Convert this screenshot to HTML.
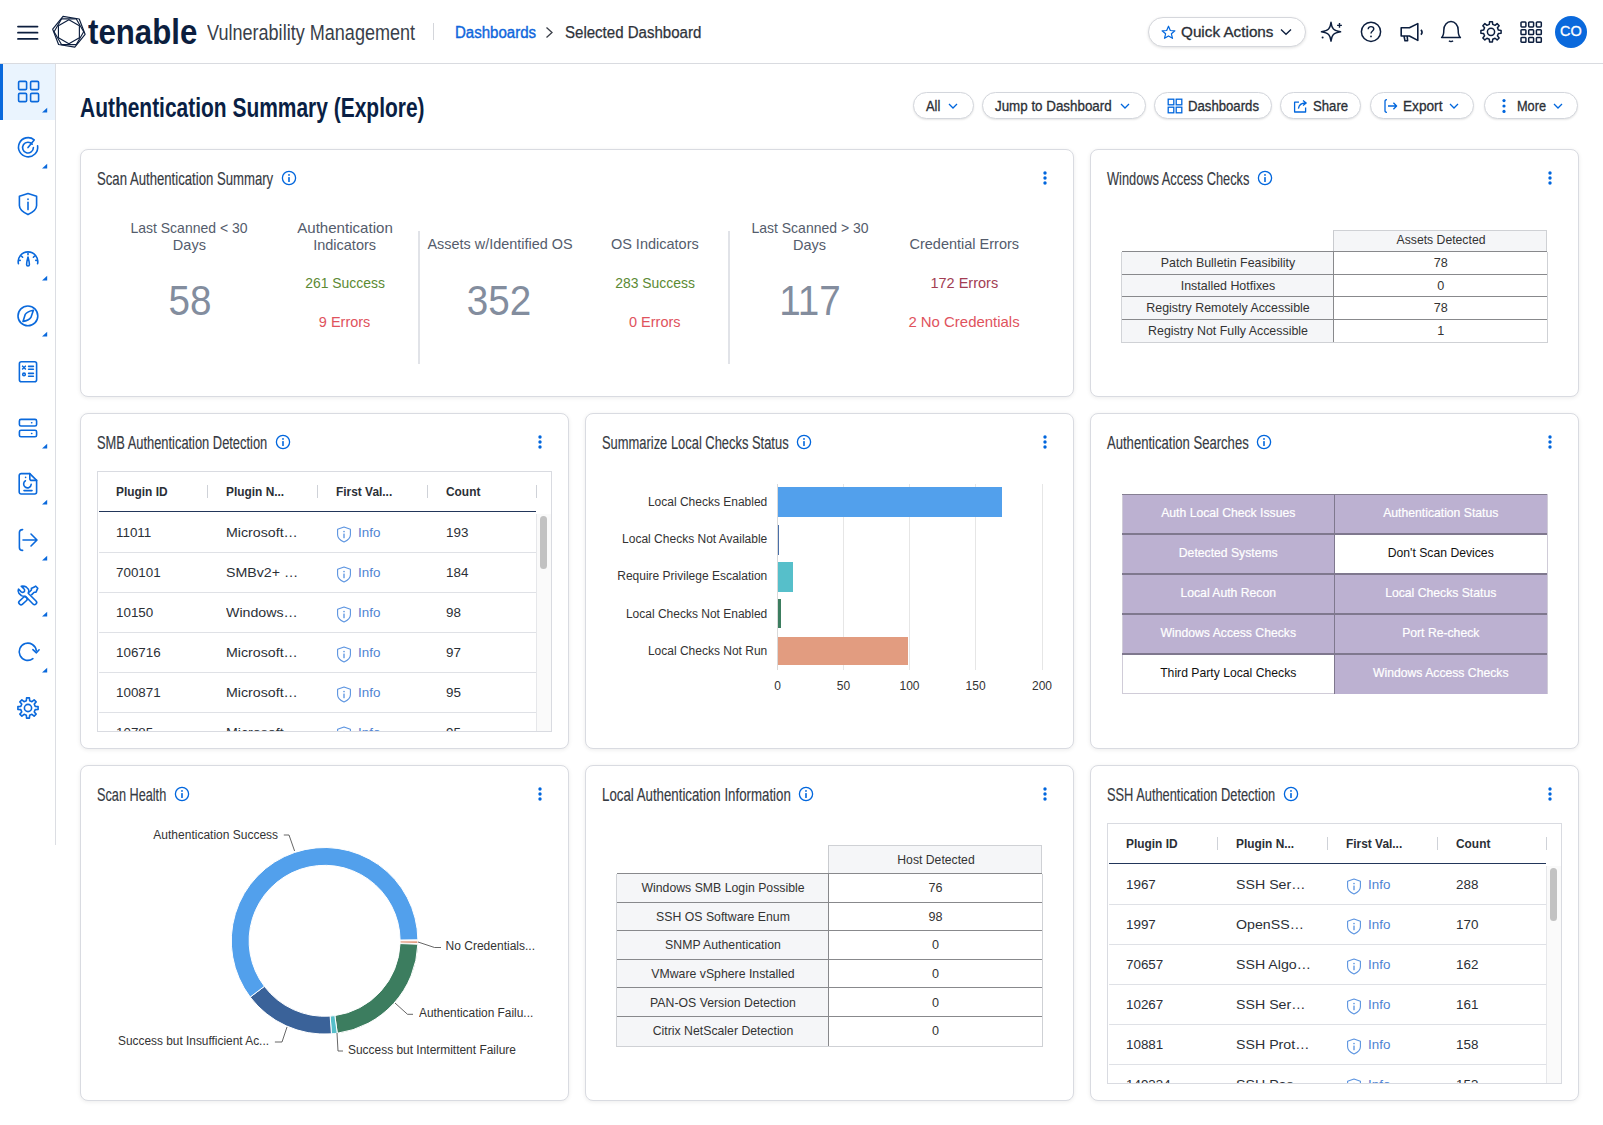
<!DOCTYPE html>
<html><head><meta charset="utf-8"><title>Authentication Summary</title>
<style>
html,body{margin:0;padding:0;background:#fff;}
body{width:1603px;height:1125px;position:relative;overflow:hidden;font-family:"Liberation Sans", sans-serif;}
.a{position:absolute;box-sizing:border-box;}
.t{position:absolute;white-space:nowrap;}
svg.a{overflow:visible;}
</style></head><body>
<div class="a" style="left:0px;top:63px;width:1603px;height:1px;background:#d9dbe0"></div>
<svg class="a" style="left:17px;top:25px;" width="22" height="16" viewBox="0 0 22 16"><g stroke="#0c1e3e" stroke-width="1.8" stroke-linecap="round"><line x1="1" y1="1.6" x2="20.5" y2="1.6"/><line x1="1" y1="7.7" x2="20.5" y2="7.7"/><line x1="1" y1="13.9" x2="20.5" y2="13.9"/></g></svg>
<svg class="a" style="left:51px;top:15px;" width="34" height="34" viewBox="0 0 34 34"><polygon points="28.38,22.80 17.90,28.85 7.42,22.80 7.42,10.70 17.90,4.65 28.38,10.70" fill="none" stroke="#0c1e3e" stroke-width="1.15" stroke-linejoin="round"/><polygon points="34.10,19.32 23.78,32.06 7.58,29.50 1.70,14.18 12.02,1.44 28.22,4.00" fill="none" stroke="#0c1e3e" stroke-width="1.15" stroke-linejoin="round"/><polygon points="32.70,16.75 25.30,29.57 10.50,29.57 3.10,16.75 10.50,3.93 25.30,3.93" fill="none" stroke="#0c1e3e" stroke-width="1.15" stroke-linejoin="round"/></svg>
<div class="t" style="top:14.37px;font-size:35px;line-height:35px;color:#0c1e3e;font-weight:bold;left:87.50px;transform:scaleX(0.892);transform-origin:0 50%;">tenable</div>
<div class="t" style="top:22.50px;font-size:21.5px;line-height:21.5px;color:#3a3f4a;font-weight:normal;left:207.00px;transform:scaleX(0.84);transform-origin:0 50%;">Vulnerability Management</div>
<div class="a" style="left:433px;top:23px;width:1px;height:17px;background:#d4d6db"></div>
<div class="t" style="top:24.76px;font-size:16px;line-height:16px;color:#0f66dc;font-weight:normal;left:454.80px;transform:scaleX(0.94);transform-origin:0 50%;-webkit-text-stroke:0.4px #0f66dc;">Dashboards</div>
<svg class="a" style="left:544px;top:26px;" width="10" height="13" viewBox="0 0 10 13"><path d="M2.5 1.5 L8 6.5 L2.5 11.5" fill="none" stroke="#3b3f48" stroke-width="1.3"/></svg>
<div class="t" style="top:24.76px;font-size:16px;line-height:16px;color:#2f333b;font-weight:normal;left:564.60px;transform:scaleX(0.94);transform-origin:0 50%;-webkit-text-stroke:0.25px #2f333b;">Selected Dashboard</div>
<div class="a" style="left:1148px;top:17px;width:158px;height:30px;border:1px solid #d5d7dc;border-radius:16px;background:#fff;box-shadow:0 1px 3px rgba(0,0,0,0.12)"></div>
<svg class="a" style="left:1161px;top:25px;" width="15" height="15" viewBox="0 0 15 15"><path d="M7.5 1.2 L9.3 5.5 L13.9 5.8 L10.4 8.8 L11.5 13.3 L7.5 10.9 L3.5 13.3 L4.6 8.8 L1.1 5.8 L5.7 5.5 Z" fill="none" stroke="#0066dd" stroke-width="1.2" stroke-linejoin="round"/></svg>
<div class="t" style="top:24.38px;font-size:15.5px;line-height:15.5px;color:#2b2f36;font-weight:normal;left:1181.00px;transform:scaleX(0.985);transform-origin:0 50%;-webkit-text-stroke:0.3px #2b2f36;">Quick Actions</div>
<svg class="a" style="left:1280px;top:28px;" width="12" height="8" viewBox="0 0 12 8"><path d="M1 1.5 L6 6.3 L11 1.5" fill="none" stroke="#0c1e3e" stroke-width="1.3"/></svg>
<svg class="a" style="left:1318px;top:20px;" width="26" height="24" viewBox="0 0 26 24"><g fill="none" stroke="#0c1e3e" stroke-width="1.4" stroke-linejoin="round"><path d="M13 2.2 C13.8 9 15.5 10.6 22.6 11.8 C15.5 13 13.8 14.6 13 21.2 C12.2 14.6 10.5 13 3.4 11.8 C10.5 10.6 12.2 9 13 2.2 Z"/><path d="M21.5 3 V7.8 M19.1 5.4 H23.9"/></g><circle cx="4.6" cy="17.6" r="1" fill="#0c1e3e"/></svg>
<svg class="a" style="left:1360px;top:21px;" width="22" height="22" viewBox="0 0 22 22"><circle cx="11" cy="10.8" r="9.6" fill="none" stroke="#0c1e3e" stroke-width="1.5"/><path d="M8.2 8.3 C8.2 6.6 9.5 5.6 11 5.6 C12.6 5.6 13.8 6.6 13.8 8.1 C13.8 10 11 10.1 11 12.4" fill="none" stroke="#0c1e3e" stroke-width="1.4"/><circle cx="11" cy="15.4" r="0.9" fill="#0c1e3e"/></svg>
<svg class="a" style="left:1399px;top:21px;" width="26" height="23" viewBox="0 0 26 23"><g fill="none" stroke="#0c1e3e" stroke-width="1.6" stroke-linejoin="round"><path d="M2.2 6.8 H10.4 L18.8 2.6 V19.4 L10.4 15 H2.2 Z"/><path d="M5 15 L6 19.8 H8.6 L8.2 15"/><path d="M22 8.8 C23.2 10.2 23.2 12.4 22 13.8"/></g></svg>
<svg class="a" style="left:1439px;top:20px;" width="24" height="24" viewBox="0 0 24 24"><g fill="none" stroke="#0c1e3e" stroke-width="1.5" stroke-linejoin="round"><path d="M2.6 17.6 C4.4 15.8 4.8 14.2 4.8 10.2 C4.8 5.2 8 1.6 12 1.6 C16 1.6 19.2 5.2 19.2 10.2 C19.2 14.2 19.6 15.8 21.4 17.6 Z"/><path d="M10 20.8 C11 21.8 13 21.8 14 20.8"/></g></svg>
<svg class="a" style="left:1479px;top:20px;" width="24" height="24" viewBox="0 0 24 24"><polygon points="19.41,10.09 22.10,10.38 22.10,13.22 19.41,13.51 18.45,15.83 20.15,17.94 18.14,19.95 16.03,18.25 13.71,19.21 13.42,21.90 10.58,21.90 10.29,19.21 7.97,18.25 5.86,19.95 3.85,17.94 5.55,15.83 4.59,13.51 1.90,13.22 1.90,10.38 4.59,10.09 5.55,7.77 3.85,5.66 5.86,3.65 7.97,5.35 10.29,4.39 10.58,1.70 13.42,1.70 13.71,4.39 16.03,5.35 18.14,3.65 20.15,5.66 18.45,7.77" fill="none" stroke="#0c1e3e" stroke-width="1.5" stroke-linejoin="round"/><circle cx="12" cy="11.8" r="3.6" fill="none" stroke="#0c1e3e" stroke-width="1.5"/></svg>
<svg class="a" style="left:1520.2px;top:20.8px;" width="24" height="24" viewBox="0 0 24 24"><rect x="1.0" y="1.0" width="4.9" height="4.9" rx="0.8" fill="none" stroke="#0c1e3e" stroke-width="1.5"/><rect x="1.0" y="8.7" width="4.9" height="4.9" rx="0.8" fill="none" stroke="#0c1e3e" stroke-width="1.5"/><rect x="1.0" y="16.4" width="4.9" height="4.9" rx="0.8" fill="none" stroke="#0c1e3e" stroke-width="1.5"/><rect x="8.7" y="1.0" width="4.9" height="4.9" rx="0.8" fill="none" stroke="#0c1e3e" stroke-width="1.5"/><rect x="8.7" y="8.7" width="4.9" height="4.9" rx="0.8" fill="none" stroke="#0c1e3e" stroke-width="1.5"/><rect x="8.7" y="16.4" width="4.9" height="4.9" rx="0.8" fill="none" stroke="#0c1e3e" stroke-width="1.5"/><rect x="16.4" y="1.0" width="4.9" height="4.9" rx="0.8" fill="none" stroke="#0c1e3e" stroke-width="1.5"/><rect x="16.4" y="8.7" width="4.9" height="4.9" rx="0.8" fill="none" stroke="#0c1e3e" stroke-width="1.5"/><rect x="16.4" y="16.4" width="4.9" height="4.9" rx="0.8" fill="none" stroke="#0c1e3e" stroke-width="1.5"/></svg>
<div class="a" style="left:1555px;top:16px;width:32px;height:32px;border-radius:50%;background:#0a69dc"></div>
<div class="t" style="top:24.33px;font-size:14.5px;line-height:14.5px;color:#fff;font-weight:normal;left:1551.00px;width:40px;text-align:center;-webkit-text-stroke:0.3px #fff;letter-spacing:0.2px;">CO</div>
<div class="a" style="left:55px;top:64px;width:1px;height:781px;background:#dcdee3"></div>
<div class="a" style="left:0px;top:64px;width:55px;height:56px;background:#eaf4fe"></div>
<div class="a" style="left:0px;top:64px;width:3px;height:56px;background:#0a69dc"></div>
<svg class="a" style="left:16px;top:80px;" width="24" height="24" viewBox="0 0 24 24"><g fill="none" stroke="#0a69dc" stroke-width="1.6" stroke-linecap="round" stroke-linejoin="round"><rect x="2.6" y="1.4" width="8" height="8.2" rx="1.2"/><rect x="14.6" y="1.4" width="8" height="8.2" rx="1.2"/><rect x="2.6" y="13.4" width="8" height="8.2" rx="1.2"/><rect x="14.6" y="13.4" width="8" height="8.2" rx="1.2"/></g></svg>
<svg class="a" style="left:41px;top:107px;" width="7" height="6" viewBox="0 0 7 6"><path d="M6.2 0.8 V5.6 H1 Z" fill="#0a69dc"/></svg>
<svg class="a" style="left:16px;top:136px;" width="24" height="24" viewBox="0 0 24 24"><g fill="none" stroke="#0a69dc" stroke-width="1.6" stroke-linecap="round" stroke-linejoin="round"><path d="M18.2 3.8 A9.6 9.6 0 1 0 21.6 9.8"/><path d="M16.2 8.2 A5.4 5.4 0 1 0 17.4 11.6"/><path d="M12 11.6 L17.8 4.6"/></g></svg>
<svg class="a" style="left:41px;top:163px;" width="7" height="6" viewBox="0 0 7 6"><path d="M6.2 0.8 V5.6 H1 Z" fill="#0a69dc"/></svg>
<svg class="a" style="left:16px;top:192px;" width="24" height="24" viewBox="0 0 24 24"><g fill="none" stroke="#0a69dc" stroke-width="1.6" stroke-linecap="round" stroke-linejoin="round"><path d="M12 1.6 L20.6 4.2 V13.6 C20.6 17.6 16.8 20.4 12 22.6 C7.2 20.4 3.4 17.6 3.4 13.6 V4.2 Z"/><path d="M12 10.4 V17.6"/><path d="M12 7 V7.4"/></g></svg>
<svg class="a" style="left:16px;top:248px;" width="24" height="24" viewBox="0 0 24 24"><g fill="none" stroke="#0a69dc" stroke-width="1.6" stroke-linecap="round" stroke-linejoin="round"><path d="M2.4 15.6 A9.8 9.8 0 1 1 21.6 15.6"/><path d="M12 5.2 V6.8 M5.4 8 L6.6 9.2 M18.6 8 L17.4 9.2 M2.6 12.4 H4.2 M21.4 12.4 H19.8"/><path d="M12 9 C13 12.6 13.4 14.8 13.4 16.6 A1.4 1.4 0 0 1 10.6 16.6 C10.6 14.8 11 12.6 12 9 Z"/></g></svg>
<svg class="a" style="left:41px;top:275px;" width="7" height="6" viewBox="0 0 7 6"><path d="M6.2 0.8 V5.6 H1 Z" fill="#0a69dc"/></svg>
<svg class="a" style="left:16px;top:304px;" width="24" height="24" viewBox="0 0 24 24"><g fill="none" stroke="#0a69dc" stroke-width="1.6" stroke-linecap="round" stroke-linejoin="round"><circle cx="11.9" cy="11.9" r="9.9"/><path d="M17.4 6.2 C13.6 6.8 10.6 8.4 9.2 10.4 L7 17.4 C10.8 16.8 13.6 15.2 15 13.2 Z"/></g></svg>
<svg class="a" style="left:41px;top:331px;" width="7" height="6" viewBox="0 0 7 6"><path d="M6.2 0.8 V5.6 H1 Z" fill="#0a69dc"/></svg>
<svg class="a" style="left:16px;top:360px;" width="24" height="24" viewBox="0 0 24 24"><g fill="none" stroke="#0a69dc" stroke-width="1.6" stroke-linecap="round" stroke-linejoin="round"><rect x="3.4" y="1.8" width="17.2" height="20" rx="2"/><path d="M6.6 6.2 L9.4 9 M9.4 6.2 L6.6 9"/><circle cx="8" cy="14.4" r="1.3"/><path d="M12.6 6.4 H17.4 M12.6 9.2 H17.4 M12.6 13.4 H17.4 M12.6 16.2 H17.4"/></g></svg>
<svg class="a" style="left:16px;top:416px;" width="24" height="24" viewBox="0 0 24 24"><g fill="none" stroke="#0a69dc" stroke-width="1.6" stroke-linecap="round" stroke-linejoin="round"><rect x="3.4" y="3.4" width="17.2" height="6.6" rx="1.6"/><rect x="3.4" y="14.2" width="17.2" height="6.6" rx="1.6"/><path d="M15.6 6.7 H15.8 M15.6 17.5 H15.8"/></g></svg>
<svg class="a" style="left:41px;top:443px;" width="7" height="6" viewBox="0 0 7 6"><path d="M6.2 0.8 V5.6 H1 Z" fill="#0a69dc"/></svg>
<svg class="a" style="left:16px;top:472px;" width="24" height="24" viewBox="0 0 24 24"><g fill="none" stroke="#0a69dc" stroke-width="1.6" stroke-linecap="round" stroke-linejoin="round"><path d="M5.2 1.6 H13.8 L20.6 8.4 V20 A2 2 0 0 1 18.6 22 H5.2 A2 2 0 0 1 3.2 20 V3.6 A2 2 0 0 1 5.2 1.6 Z"/><path d="M13.8 1.6 V6.4 A2 2 0 0 0 15.8 8.4 H20.6"/><path d="M9.4 8.8 A3.8 3.8 0 1 0 15.2 12.4"/><path d="M9.6 5.2 V5.4"/><path d="M8 18.6 H16"/></g></svg>
<svg class="a" style="left:41px;top:499px;" width="7" height="6" viewBox="0 0 7 6"><path d="M6.2 0.8 V5.6 H1 Z" fill="#0a69dc"/></svg>
<svg class="a" style="left:16px;top:528px;" width="24" height="24" viewBox="0 0 24 24"><g fill="none" stroke="#0a69dc" stroke-width="1.6" stroke-linecap="round" stroke-linejoin="round"><path d="M6.6 1.6 C4.4 1.6 3.4 2.6 3.4 4.6 V19.4 C3.4 21.4 4.4 22.4 6.6 22.4"/><path d="M7 12 H20.8 M15 6 L21 12 L15 18"/></g></svg>
<svg class="a" style="left:41px;top:555px;" width="7" height="6" viewBox="0 0 7 6"><path d="M6.2 0.8 V5.6 H1 Z" fill="#0a69dc"/></svg>
<svg class="a" style="left:16px;top:584px;" width="24" height="24" viewBox="0 0 24 24"><g fill="none" stroke="#0a69dc" stroke-width="1.6" stroke-linecap="round" stroke-linejoin="round"><path d="M5.2 2.2 C7 2 9 2.2 10.2 3 L12.4 5.2 C13 6.2 12.8 8 12.2 9.2 L20 17 C20.8 17.8 20.8 19.2 20 20 C19.2 20.8 17.8 20.8 17 20 L9.4 12.2 C8 12.4 6.4 12.2 5.4 11.6 L3 9.4 C2 8.2 1.8 6.6 2.5 5.2 L5.2 7.8 C6.2 8.6 7.6 8.6 8.4 7.6 C8.8 6.6 8.6 5.2 7.8 4.6 Z"/><path d="M13.4 8 L15.4 6 V4.2 C17 3.6 18.4 3.2 19.8 2.2 L21.8 4.2 C21 5.4 20.6 7 20 8.2 H18.2 L15.8 10.6"/><rect x="2.3" y="14.6" width="9.3" height="4.4" rx="1.8" transform="rotate(-42 6.95 16.8)"/></g></svg>
<svg class="a" style="left:41px;top:611px;" width="7" height="6" viewBox="0 0 7 6"><path d="M6.2 0.8 V5.6 H1 Z" fill="#0a69dc"/></svg>
<svg class="a" style="left:16px;top:640px;" width="24" height="24" viewBox="0 0 24 24"><g fill="none" stroke="#0a69dc" stroke-width="1.6" stroke-linecap="round" stroke-linejoin="round"><path d="M16.9 18.7 A8.6 8.6 0 1 1 20.3 10.6"/><path d="M16.9 9.6 L20.4 12.8 L23.1 9.8"/></g></svg>
<svg class="a" style="left:41px;top:667px;" width="7" height="6" viewBox="0 0 7 6"><path d="M6.2 0.8 V5.6 H1 Z" fill="#0a69dc"/></svg>
<svg class="a" style="left:16px;top:696px;" width="24" height="24" viewBox="0 0 24 24"><polygon points="19.21,10.34 22.10,10.58 22.10,13.42 19.21,13.66 18.28,15.92 20.15,18.14 18.14,20.15 15.92,18.28 13.66,19.21 13.42,22.10 10.58,22.10 10.34,19.21 8.08,18.28 5.86,20.15 3.85,18.14 5.72,15.92 4.79,13.66 1.90,13.42 1.90,10.58 4.79,10.34 5.72,8.08 3.85,5.86 5.86,3.85 8.08,5.72 10.34,4.79 10.58,1.90 13.42,1.90 13.66,4.79 15.92,5.72 18.14,3.85 20.15,5.86 18.28,8.08" fill="none" stroke="#0a69dc" stroke-width="1.6" stroke-linejoin="round"/><circle cx="12" cy="12" r="3.6" fill="none" stroke="#0a69dc" stroke-width="1.6"/></svg>
<div class="t" style="top:93.27px;font-size:28.5px;line-height:28.5px;color:#0a1f44;font-weight:bold;left:80.00px;transform:scaleX(0.735);transform-origin:0 50%;">Authentication Summary (Explore)</div>
<div class="a" style="left:913px;top:92px;width:61px;height:27px;border:1px solid #d3d6dc;border-radius:14px;background:#fff;box-shadow:0 1px 2px rgba(0,0,0,0.10)"></div>
<div class="t" style="top:98.95px;font-size:14px;line-height:14px;color:#2b2f36;font-weight:normal;left:926.00px;transform:scaleX(0.92);transform-origin:0 50%;-webkit-text-stroke:0.3px #2b2f36;">All</div>
<svg class="a" style="left:948px;top:103px;" width="10" height="6" viewBox="0 0 10 6"><path d="M1 1 L5 5 L9 1" fill="none" stroke="#0066dd" stroke-width="1.3"/></svg>
<div class="a" style="left:982px;top:92px;width:164px;height:27px;border:1px solid #d3d6dc;border-radius:14px;background:#fff;box-shadow:0 1px 2px rgba(0,0,0,0.10)"></div>
<div class="t" style="top:98.95px;font-size:14px;line-height:14px;color:#2b2f36;font-weight:normal;left:995.00px;transform:scaleX(0.955);transform-origin:0 50%;-webkit-text-stroke:0.3px #2b2f36;">Jump to Dashboard</div>
<svg class="a" style="left:1120px;top:103px;" width="10" height="6" viewBox="0 0 10 6"><path d="M1 1 L5 5 L9 1" fill="none" stroke="#0066dd" stroke-width="1.3"/></svg>
<div class="a" style="left:1154px;top:92px;width:118px;height:27px;border:1px solid #d3d6dc;border-radius:14px;background:#fff;box-shadow:0 1px 2px rgba(0,0,0,0.10)"></div>
<svg class="a" style="left:1167px;top:98px;" width="16" height="16" viewBox="0 0 16 16"><g fill="none" stroke="#0066dd" stroke-width="1.3"><rect x="1.2" y="1.2" width="5.6" height="5.6"/><rect x="9.2" y="1.2" width="5.6" height="5.6"/><rect x="1.2" y="9.2" width="5.6" height="5.6"/><rect x="9.2" y="9.2" width="5.6" height="5.6"/></g></svg>
<div class="t" style="top:98.95px;font-size:14px;line-height:14px;color:#2b2f36;font-weight:normal;left:1187.50px;transform:scaleX(0.94);transform-origin:0 50%;-webkit-text-stroke:0.3px #2b2f36;">Dashboards</div>
<div class="a" style="left:1280px;top:92px;width:81px;height:27px;border:1px solid #d3d6dc;border-radius:14px;background:#fff;box-shadow:0 1px 2px rgba(0,0,0,0.10)"></div>
<svg class="a" style="left:1293px;top:98px;" width="16" height="16" viewBox="0 0 16 16"><g fill="none" stroke="#0066dd" stroke-width="1.3" stroke-linejoin="round"><path d="M6 4.2 H1.6 V14 H12.6 V9.6"/><path d="M5.4 10.6 C6 7 8.6 5 12.4 5 M10 2.4 L13.2 5 L10 7.6"/></g></svg>
<div class="t" style="top:98.95px;font-size:14px;line-height:14px;color:#2b2f36;font-weight:normal;left:1312.50px;transform:scaleX(0.94);transform-origin:0 50%;-webkit-text-stroke:0.3px #2b2f36;">Share</div>
<div class="a" style="left:1370px;top:92px;width:104px;height:27px;border:1px solid #d3d6dc;border-radius:14px;background:#fff;box-shadow:0 1px 2px rgba(0,0,0,0.10)"></div>
<svg class="a" style="left:1383px;top:98px;" width="16" height="16" viewBox="0 0 16 16"><g fill="none" stroke="#0066dd" stroke-width="1.3" stroke-linejoin="round"><path d="M4 1.6 C2.6 1.6 2 2.2 2 3.2 V12.8 C2 13.8 2.6 14.4 4 14.4"/><path d="M5 8 H13.6 M10.4 4.8 L13.6 8 L10.4 11.2"/></g></svg>
<div class="t" style="top:98.95px;font-size:14px;line-height:14px;color:#2b2f36;font-weight:normal;left:1402.50px;transform:scaleX(0.975);transform-origin:0 50%;-webkit-text-stroke:0.3px #2b2f36;">Export</div>
<svg class="a" style="left:1449px;top:103px;" width="10" height="6" viewBox="0 0 10 6"><path d="M1 1 L5 5 L9 1" fill="none" stroke="#0066dd" stroke-width="1.3"/></svg>
<div class="a" style="left:1484px;top:92px;width:94px;height:27px;border:1px solid #d3d6dc;border-radius:14px;background:#fff;box-shadow:0 1px 2px rgba(0,0,0,0.10)"></div>
<svg class="a" style="left:1500px;top:98px;" width="8" height="16" viewBox="0 0 8 16"><g fill="#0066dd"><circle cx="4" cy="2.6" r="1.6"/><circle cx="4" cy="8" r="1.6"/><circle cx="4" cy="13.4" r="1.6"/></g></svg>
<div class="t" style="top:98.95px;font-size:14px;line-height:14px;color:#2b2f36;font-weight:normal;left:1516.50px;transform:scaleX(0.91);transform-origin:0 50%;-webkit-text-stroke:0.3px #2b2f36;">More</div>
<svg class="a" style="left:1553px;top:103px;" width="10" height="6" viewBox="0 0 10 6"><path d="M1 1 L5 5 L9 1" fill="none" stroke="#0066dd" stroke-width="1.3"/></svg>
<div class="a" style="left:80px;top:149px;width:994px;height:248px;border:1px solid #d9dbe1;border-radius:8px;background:#fff;box-shadow:0 1px 4px rgba(0,0,0,0.08)"></div>
<div class="t" style="top:170.99px;font-size:17.5px;line-height:17.5px;color:#363a42;font-weight:normal;left:97.00px;transform:scaleX(0.7515782289711653);transform-origin:0 50%;-webkit-text-stroke:0.15px #363a42;">Scan Authentication Summary</div>
<svg class="a" style="left:280.5px;top:170px;" width="16" height="16" viewBox="0 0 16 16"><circle cx="8" cy="8" r="6.6" fill="none" stroke="#0066dd" stroke-width="1.3"/><rect x="7.2" y="7" width="1.6" height="5" rx="0.6" fill="#0066dd"/><circle cx="8" cy="4.9" r="0.95" fill="#0066dd"/></svg>
<svg class="a" style="left:1041px;top:170px;" width="8" height="16" viewBox="0 0 8 16"><g fill="#0066dd"><circle cx="4" cy="3" r="1.7"/><circle cx="4" cy="8" r="1.7"/><circle cx="4" cy="13" r="1.7"/></g></svg>
<div class="a" style="left:1090px;top:149px;width:489px;height:248px;border:1px solid #d9dbe1;border-radius:8px;background:#fff;box-shadow:0 1px 4px rgba(0,0,0,0.08)"></div>
<div class="t" style="top:170.99px;font-size:17.5px;line-height:17.5px;color:#363a42;font-weight:normal;left:1107.00px;transform:scaleX(0.7320584001645074);transform-origin:0 50%;-webkit-text-stroke:0.15px #363a42;">Windows Access Checks</div>
<svg class="a" style="left:1256.7px;top:170px;" width="16" height="16" viewBox="0 0 16 16"><circle cx="8" cy="8" r="6.6" fill="none" stroke="#0066dd" stroke-width="1.3"/><rect x="7.2" y="7" width="1.6" height="5" rx="0.6" fill="#0066dd"/><circle cx="8" cy="4.9" r="0.95" fill="#0066dd"/></svg>
<svg class="a" style="left:1546px;top:170px;" width="8" height="16" viewBox="0 0 8 16"><g fill="#0066dd"><circle cx="4" cy="3" r="1.7"/><circle cx="4" cy="8" r="1.7"/><circle cx="4" cy="13" r="1.7"/></g></svg>
<div class="a" style="left:80px;top:413px;width:489px;height:336px;border:1px solid #d9dbe1;border-radius:8px;background:#fff;box-shadow:0 1px 4px rgba(0,0,0,0.08)"></div>
<div class="t" style="top:434.99px;font-size:17.5px;line-height:17.5px;color:#363a42;font-weight:normal;left:97.00px;transform:scaleX(0.7351099209605666);transform-origin:0 50%;-webkit-text-stroke:0.15px #363a42;">SMB Authentication Detection</div>
<svg class="a" style="left:274.5px;top:434px;" width="16" height="16" viewBox="0 0 16 16"><circle cx="8" cy="8" r="6.6" fill="none" stroke="#0066dd" stroke-width="1.3"/><rect x="7.2" y="7" width="1.6" height="5" rx="0.6" fill="#0066dd"/><circle cx="8" cy="4.9" r="0.95" fill="#0066dd"/></svg>
<svg class="a" style="left:536px;top:434px;" width="8" height="16" viewBox="0 0 8 16"><g fill="#0066dd"><circle cx="4" cy="3" r="1.7"/><circle cx="4" cy="8" r="1.7"/><circle cx="4" cy="13" r="1.7"/></g></svg>
<div class="a" style="left:585px;top:413px;width:489px;height:336px;border:1px solid #d9dbe1;border-radius:8px;background:#fff;box-shadow:0 1px 4px rgba(0,0,0,0.08)"></div>
<div class="t" style="top:434.99px;font-size:17.5px;line-height:17.5px;color:#363a42;font-weight:normal;left:602.00px;transform:scaleX(0.7378702202538653);transform-origin:0 50%;-webkit-text-stroke:0.15px #363a42;">Summarize Local Checks Status</div>
<svg class="a" style="left:795.9px;top:434px;" width="16" height="16" viewBox="0 0 16 16"><circle cx="8" cy="8" r="6.6" fill="none" stroke="#0066dd" stroke-width="1.3"/><rect x="7.2" y="7" width="1.6" height="5" rx="0.6" fill="#0066dd"/><circle cx="8" cy="4.9" r="0.95" fill="#0066dd"/></svg>
<svg class="a" style="left:1041px;top:434px;" width="8" height="16" viewBox="0 0 8 16"><g fill="#0066dd"><circle cx="4" cy="3" r="1.7"/><circle cx="4" cy="8" r="1.7"/><circle cx="4" cy="13" r="1.7"/></g></svg>
<div class="a" style="left:1090px;top:413px;width:489px;height:336px;border:1px solid #d9dbe1;border-radius:8px;background:#fff;box-shadow:0 1px 4px rgba(0,0,0,0.08)"></div>
<div class="t" style="top:434.99px;font-size:17.5px;line-height:17.5px;color:#363a42;font-weight:normal;left:1107.00px;transform:scaleX(0.7468901539110268);transform-origin:0 50%;-webkit-text-stroke:0.15px #363a42;">Authentication Searches</div>
<svg class="a" style="left:1256.0px;top:434px;" width="16" height="16" viewBox="0 0 16 16"><circle cx="8" cy="8" r="6.6" fill="none" stroke="#0066dd" stroke-width="1.3"/><rect x="7.2" y="7" width="1.6" height="5" rx="0.6" fill="#0066dd"/><circle cx="8" cy="4.9" r="0.95" fill="#0066dd"/></svg>
<svg class="a" style="left:1546px;top:434px;" width="8" height="16" viewBox="0 0 8 16"><g fill="#0066dd"><circle cx="4" cy="3" r="1.7"/><circle cx="4" cy="8" r="1.7"/><circle cx="4" cy="13" r="1.7"/></g></svg>
<div class="a" style="left:80px;top:765px;width:489px;height:336px;border:1px solid #d9dbe1;border-radius:8px;background:#fff;box-shadow:0 1px 4px rgba(0,0,0,0.08)"></div>
<div class="t" style="top:786.99px;font-size:17.5px;line-height:17.5px;color:#363a42;font-weight:normal;left:97.00px;transform:scaleX(0.7258233689951752);transform-origin:0 50%;-webkit-text-stroke:0.15px #363a42;">Scan Health</div>
<svg class="a" style="left:173.5px;top:786px;" width="16" height="16" viewBox="0 0 16 16"><circle cx="8" cy="8" r="6.6" fill="none" stroke="#0066dd" stroke-width="1.3"/><rect x="7.2" y="7" width="1.6" height="5" rx="0.6" fill="#0066dd"/><circle cx="8" cy="4.9" r="0.95" fill="#0066dd"/></svg>
<svg class="a" style="left:536px;top:786px;" width="8" height="16" viewBox="0 0 8 16"><g fill="#0066dd"><circle cx="4" cy="3" r="1.7"/><circle cx="4" cy="8" r="1.7"/><circle cx="4" cy="13" r="1.7"/></g></svg>
<div class="a" style="left:585px;top:765px;width:489px;height:336px;border:1px solid #d9dbe1;border-radius:8px;background:#fff;box-shadow:0 1px 4px rgba(0,0,0,0.08)"></div>
<div class="t" style="top:786.99px;font-size:17.5px;line-height:17.5px;color:#363a42;font-weight:normal;left:602.00px;transform:scaleX(0.7580502690114831);transform-origin:0 50%;-webkit-text-stroke:0.15px #363a42;">Local Authentication Information</div>
<svg class="a" style="left:798.1px;top:786px;" width="16" height="16" viewBox="0 0 16 16"><circle cx="8" cy="8" r="6.6" fill="none" stroke="#0066dd" stroke-width="1.3"/><rect x="7.2" y="7" width="1.6" height="5" rx="0.6" fill="#0066dd"/><circle cx="8" cy="4.9" r="0.95" fill="#0066dd"/></svg>
<svg class="a" style="left:1041px;top:786px;" width="8" height="16" viewBox="0 0 8 16"><g fill="#0066dd"><circle cx="4" cy="3" r="1.7"/><circle cx="4" cy="8" r="1.7"/><circle cx="4" cy="13" r="1.7"/></g></svg>
<div class="a" style="left:1090px;top:765px;width:489px;height:336px;border:1px solid #d9dbe1;border-radius:8px;background:#fff;box-shadow:0 1px 4px rgba(0,0,0,0.08)"></div>
<div class="t" style="top:786.99px;font-size:17.5px;line-height:17.5px;color:#363a42;font-weight:normal;left:1107.00px;transform:scaleX(0.732610305326887);transform-origin:0 50%;-webkit-text-stroke:0.15px #363a42;">SSH Authentication Detection</div>
<svg class="a" style="left:1282.5px;top:786px;" width="16" height="16" viewBox="0 0 16 16"><circle cx="8" cy="8" r="6.6" fill="none" stroke="#0066dd" stroke-width="1.3"/><rect x="7.2" y="7" width="1.6" height="5" rx="0.6" fill="#0066dd"/><circle cx="8" cy="4.9" r="0.95" fill="#0066dd"/></svg>
<svg class="a" style="left:1546px;top:786px;" width="8" height="16" viewBox="0 0 8 16"><g fill="#0066dd"><circle cx="4" cy="3" r="1.7"/><circle cx="4" cy="8" r="1.7"/><circle cx="4" cy="13" r="1.7"/></g></svg>
<div class="t" style="top:221.13px;font-size:14.5px;line-height:14.5px;color:#545c6c;font-weight:normal;left:89.40px;width:200px;text-align:center;transform:scaleX(0.965);transform-origin:50% 50%;">Last Scanned &lt; 30</div>
<div class="t" style="top:237.73px;font-size:14.5px;line-height:14.5px;color:#545c6c;font-weight:normal;left:89.40px;width:200px;text-align:center;">Days</div>
<div class="t" style="top:221.13px;font-size:14.5px;line-height:14.5px;color:#545c6c;font-weight:normal;left:244.60px;width:200px;text-align:center;transform:scaleX(1.04);transform-origin:50% 50%;">Authentication</div>
<div class="t" style="top:237.73px;font-size:14.5px;line-height:14.5px;color:#545c6c;font-weight:normal;left:244.60px;width:200px;text-align:center;">Indicators</div>
<div class="t" style="top:221.13px;font-size:14.5px;line-height:14.5px;color:#545c6c;font-weight:normal;left:709.50px;width:200px;text-align:center;transform:scaleX(0.965);transform-origin:50% 50%;">Last Scanned &gt; 30</div>
<div class="t" style="top:237.73px;font-size:14.5px;line-height:14.5px;color:#545c6c;font-weight:normal;left:709.50px;width:200px;text-align:center;">Days</div>
<div class="t" style="top:236.73px;font-size:14.5px;line-height:14.5px;color:#545c6c;font-weight:normal;left:389.70px;width:220px;text-align:center;transform:scaleX(0.995);transform-origin:50% 50%;">Assets w/Identified OS</div>
<div class="t" style="top:236.73px;font-size:14.5px;line-height:14.5px;color:#545c6c;font-weight:normal;left:544.80px;width:220px;text-align:center;">OS Indicators</div>
<div class="t" style="top:236.73px;font-size:14.5px;line-height:14.5px;color:#545c6c;font-weight:normal;left:854.30px;width:220px;text-align:center;">Credential Errors</div>
<div class="t" style="top:279.95px;font-size:42px;line-height:42px;color:#838d9e;font-weight:normal;left:129.60px;width:120px;text-align:center;transform:scaleX(0.92);transform-origin:50% 50%;">58</div>
<div class="t" style="top:279.95px;font-size:42px;line-height:42px;color:#838d9e;font-weight:normal;left:439.20px;width:120px;text-align:center;transform:scaleX(0.92);transform-origin:50% 50%;">352</div>
<div class="t" style="top:279.95px;font-size:42px;line-height:42px;color:#838d9e;font-weight:normal;left:749.50px;width:120px;text-align:center;transform:scaleX(0.92);transform-origin:50% 50%;">117</div>
<div class="t" style="top:275.73px;font-size:14.5px;line-height:14.5px;color:#5b8a34;font-weight:normal;left:244.60px;width:200px;text-align:center;transform:scaleX(0.96);transform-origin:50% 50%;">261 Success</div>
<div class="t" style="top:314.73px;font-size:14.5px;line-height:14.5px;color:#e0535d;font-weight:normal;left:244.60px;width:200px;text-align:center;">9 Errors</div>
<div class="t" style="top:275.73px;font-size:14.5px;line-height:14.5px;color:#5b8a34;font-weight:normal;left:554.80px;width:200px;text-align:center;transform:scaleX(0.96);transform-origin:50% 50%;">283 Success</div>
<div class="t" style="top:314.73px;font-size:14.5px;line-height:14.5px;color:#e0535d;font-weight:normal;left:554.80px;width:200px;text-align:center;">0 Errors</div>
<div class="t" style="top:275.73px;font-size:14.5px;line-height:14.5px;color:#a23d53;font-weight:normal;left:864.30px;width:200px;text-align:center;">172 Errors</div>
<div class="t" style="top:314.73px;font-size:14.5px;line-height:14.5px;color:#e0535d;font-weight:normal;left:864.30px;width:200px;text-align:center;transform:scaleX(1.03);transform-origin:50% 50%;">2 No Credentials</div>
<div class="a" style="left:418px;top:231px;width:1.5px;height:133px;background:#e1e3e8"></div>
<div class="a" style="left:728px;top:231px;width:1.5px;height:133px;background:#e1e3e8"></div>
<div class="a" style="left:1333px;top:230px;width:214px;height:22px;background:#f5f6f8;border:1px solid #cfd1d5;border-left:1.5px solid #c9cbcf;border-bottom:none"></div>
<div class="a" style="left:1122px;top:252px;width:212px;height:90px;background:#f5f6f8"></div>
<div class="a" style="left:1121px;top:252px;width:427px;height:91px;border:1px solid #cfd1d5;border-top:none;border-left:1.5px solid #d2d4d8"></div>
<div class="a" style="left:1122px;top:251px;width:425px;height:1px;background:#88898c"></div>
<div class="a" style="left:1122px;top:274px;width:425px;height:1px;background:#88898c"></div>
<div class="a" style="left:1122px;top:296px;width:425px;height:1px;background:#88898c"></div>
<div class="a" style="left:1122px;top:319px;width:425px;height:1px;background:#88898c"></div>
<div class="a" style="left:1333px;top:252px;width:1px;height:90px;background:#88898c"></div>
<div class="t" style="top:234.07px;font-size:12.6px;line-height:12.6px;color:#333333;font-weight:normal;left:1290.75px;width:300px;text-align:center;transform:scaleX(0.97);transform-origin:50% 50%;">Assets Detected</div>
<div class="t" style="top:257.33px;font-size:12.6px;line-height:12.6px;color:#333333;font-weight:normal;left:1078.25px;width:300px;text-align:center;transform:scaleX(0.985);transform-origin:50% 50%;">Patch Bulletin Feasibility</div>
<div class="t" style="top:257.33px;font-size:12.6px;line-height:12.6px;color:#333333;font-weight:normal;left:1340.75px;width:200px;text-align:center;">78</div>
<div class="t" style="top:279.83px;font-size:12.6px;line-height:12.6px;color:#333333;font-weight:normal;left:1078.25px;width:300px;text-align:center;transform:scaleX(0.985);transform-origin:50% 50%;">Installed Hotfixes</div>
<div class="t" style="top:279.83px;font-size:12.6px;line-height:12.6px;color:#333333;font-weight:normal;left:1340.75px;width:200px;text-align:center;">0</div>
<div class="t" style="top:302.33px;font-size:12.6px;line-height:12.6px;color:#333333;font-weight:normal;left:1078.25px;width:300px;text-align:center;transform:scaleX(0.985);transform-origin:50% 50%;">Registry Remotely Accessible</div>
<div class="t" style="top:302.33px;font-size:12.6px;line-height:12.6px;color:#333333;font-weight:normal;left:1340.75px;width:200px;text-align:center;">78</div>
<div class="t" style="top:324.73px;font-size:12.6px;line-height:12.6px;color:#333333;font-weight:normal;left:1078.25px;width:300px;text-align:center;transform:scaleX(0.985);transform-origin:50% 50%;">Registry Not Fully Accessible</div>
<div class="t" style="top:324.73px;font-size:12.6px;line-height:12.6px;color:#333333;font-weight:normal;left:1340.75px;width:200px;text-align:center;">1</div>
<div class="a" style="left:97px;top:471px;width:455px;height:261px;border:1.5px solid #d9dbe1;background:#fff"></div>
<div class="a" style="left:98.5px;top:472.5px;width:452px;height:258px;overflow:hidden;">
<div class="t" style="top:13.36px;font-size:12.8px;line-height:12.8px;color:#2b2f36;font-weight:bold;left:17.50px;transform:scaleX(0.93);transform-origin:0 50%;">Plugin ID</div>
<div class="t" style="top:13.36px;font-size:12.8px;line-height:12.8px;color:#2b2f36;font-weight:bold;left:127.50px;transform:scaleX(0.93);transform-origin:0 50%;">Plugin N...</div>
<div class="t" style="top:13.36px;font-size:12.8px;line-height:12.8px;color:#2b2f36;font-weight:bold;left:237.50px;transform:scaleX(0.93);transform-origin:0 50%;">First Val...</div>
<div class="t" style="top:13.36px;font-size:12.8px;line-height:12.8px;color:#2b2f36;font-weight:bold;left:347.50px;transform:scaleX(0.93);transform-origin:0 50%;">Count</div>
<div class="a" style="left:108.5px;top:12.5px;width:1px;height:13px;background:#cfd2d8"></div>
<div class="a" style="left:218.5px;top:12.5px;width:1px;height:13px;background:#cfd2d8"></div>
<div class="a" style="left:328.5px;top:12.5px;width:1px;height:13px;background:#cfd2d8"></div>
<div class="a" style="left:437.0px;top:12.5px;width:1px;height:13px;background:#cfd2d8"></div>
<div class="a" style="left:-1.5px;top:38.39999999999998px;width:438.5px;height:1.6px;background:#22365a"></div>
<div class="a" style="left:437.0px;top:41.0px;width:15px;height:217px;background:#fafafa;border-left:1px solid #e6e7ea"></div>
<div class="a" style="left:441.5px;top:43.5px;width:7.4px;height:52.5px;background:#c2c2c2;border-radius:4px"></div>
<div class="a" style="left:-1.5px;top:79.5px;width:438.5px;height:1.2px;background:#dfe1e6"></div>
<div class="t" style="top:53.86px;font-size:13.4px;line-height:13.4px;color:#2b2f36;font-weight:normal;left:17.50px;">11011</div>
<div class="t" style="top:53.86px;font-size:13.4px;line-height:13.4px;color:#2b2f36;font-weight:normal;left:127.50px;transform:scaleX(1.06);transform-origin:0 50%;">Microsoft…</div>
<svg class="a" style="left:237.0px;top:53.5px;" width="16" height="17" viewBox="0 0 16 17"><path d="M8 1 L14.4 3.2 V8.8 C14.4 12 11.8 14.4 8 16 C4.2 14.4 1.6 12 1.6 8.8 V3.2 Z" fill="none" stroke="#5a93e0" stroke-width="1.1" stroke-linejoin="round"/><rect x="7.35" y="7.6" width="1.3" height="4.6" fill="#5a93e0"/><circle cx="8" cy="5.6" r="0.8" fill="#5a93e0"/></svg>
<div class="t" style="top:53.86px;font-size:13.4px;line-height:13.4px;color:#4f84d3;font-weight:normal;left:259.50px;">Info</div>
<div class="t" style="top:53.86px;font-size:13.4px;line-height:13.4px;color:#2b2f36;font-weight:normal;left:347.50px;">193</div>
<div class="a" style="left:-1.5px;top:119.5px;width:438.5px;height:1.2px;background:#dfe1e6"></div>
<div class="t" style="top:93.86px;font-size:13.4px;line-height:13.4px;color:#2b2f36;font-weight:normal;left:17.50px;">700101</div>
<div class="t" style="top:93.86px;font-size:13.4px;line-height:13.4px;color:#2b2f36;font-weight:normal;left:127.50px;transform:scaleX(1.06);transform-origin:0 50%;">SMBv2+ …</div>
<svg class="a" style="left:237.0px;top:93.5px;" width="16" height="17" viewBox="0 0 16 17"><path d="M8 1 L14.4 3.2 V8.8 C14.4 12 11.8 14.4 8 16 C4.2 14.4 1.6 12 1.6 8.8 V3.2 Z" fill="none" stroke="#5a93e0" stroke-width="1.1" stroke-linejoin="round"/><rect x="7.35" y="7.6" width="1.3" height="4.6" fill="#5a93e0"/><circle cx="8" cy="5.6" r="0.8" fill="#5a93e0"/></svg>
<div class="t" style="top:93.86px;font-size:13.4px;line-height:13.4px;color:#4f84d3;font-weight:normal;left:259.50px;">Info</div>
<div class="t" style="top:93.86px;font-size:13.4px;line-height:13.4px;color:#2b2f36;font-weight:normal;left:347.50px;">184</div>
<div class="a" style="left:-1.5px;top:159.5px;width:438.5px;height:1.2px;background:#dfe1e6"></div>
<div class="t" style="top:133.86px;font-size:13.4px;line-height:13.4px;color:#2b2f36;font-weight:normal;left:17.50px;">10150</div>
<div class="t" style="top:133.86px;font-size:13.4px;line-height:13.4px;color:#2b2f36;font-weight:normal;left:127.50px;transform:scaleX(1.06);transform-origin:0 50%;">Windows…</div>
<svg class="a" style="left:237.0px;top:133.5px;" width="16" height="17" viewBox="0 0 16 17"><path d="M8 1 L14.4 3.2 V8.8 C14.4 12 11.8 14.4 8 16 C4.2 14.4 1.6 12 1.6 8.8 V3.2 Z" fill="none" stroke="#5a93e0" stroke-width="1.1" stroke-linejoin="round"/><rect x="7.35" y="7.6" width="1.3" height="4.6" fill="#5a93e0"/><circle cx="8" cy="5.6" r="0.8" fill="#5a93e0"/></svg>
<div class="t" style="top:133.86px;font-size:13.4px;line-height:13.4px;color:#4f84d3;font-weight:normal;left:259.50px;">Info</div>
<div class="t" style="top:133.86px;font-size:13.4px;line-height:13.4px;color:#2b2f36;font-weight:normal;left:347.50px;">98</div>
<div class="a" style="left:-1.5px;top:199.5px;width:438.5px;height:1.2px;background:#dfe1e6"></div>
<div class="t" style="top:173.86px;font-size:13.4px;line-height:13.4px;color:#2b2f36;font-weight:normal;left:17.50px;">106716</div>
<div class="t" style="top:173.86px;font-size:13.4px;line-height:13.4px;color:#2b2f36;font-weight:normal;left:127.50px;transform:scaleX(1.06);transform-origin:0 50%;">Microsoft…</div>
<svg class="a" style="left:237.0px;top:173.5px;" width="16" height="17" viewBox="0 0 16 17"><path d="M8 1 L14.4 3.2 V8.8 C14.4 12 11.8 14.4 8 16 C4.2 14.4 1.6 12 1.6 8.8 V3.2 Z" fill="none" stroke="#5a93e0" stroke-width="1.1" stroke-linejoin="round"/><rect x="7.35" y="7.6" width="1.3" height="4.6" fill="#5a93e0"/><circle cx="8" cy="5.6" r="0.8" fill="#5a93e0"/></svg>
<div class="t" style="top:173.86px;font-size:13.4px;line-height:13.4px;color:#4f84d3;font-weight:normal;left:259.50px;">Info</div>
<div class="t" style="top:173.86px;font-size:13.4px;line-height:13.4px;color:#2b2f36;font-weight:normal;left:347.50px;">97</div>
<div class="a" style="left:-1.5px;top:239.5px;width:438.5px;height:1.2px;background:#dfe1e6"></div>
<div class="t" style="top:213.86px;font-size:13.4px;line-height:13.4px;color:#2b2f36;font-weight:normal;left:17.50px;">100871</div>
<div class="t" style="top:213.86px;font-size:13.4px;line-height:13.4px;color:#2b2f36;font-weight:normal;left:127.50px;transform:scaleX(1.06);transform-origin:0 50%;">Microsoft…</div>
<svg class="a" style="left:237.0px;top:213.5px;" width="16" height="17" viewBox="0 0 16 17"><path d="M8 1 L14.4 3.2 V8.8 C14.4 12 11.8 14.4 8 16 C4.2 14.4 1.6 12 1.6 8.8 V3.2 Z" fill="none" stroke="#5a93e0" stroke-width="1.1" stroke-linejoin="round"/><rect x="7.35" y="7.6" width="1.3" height="4.6" fill="#5a93e0"/><circle cx="8" cy="5.6" r="0.8" fill="#5a93e0"/></svg>
<div class="t" style="top:213.86px;font-size:13.4px;line-height:13.4px;color:#4f84d3;font-weight:normal;left:259.50px;">Info</div>
<div class="t" style="top:213.86px;font-size:13.4px;line-height:13.4px;color:#2b2f36;font-weight:normal;left:347.50px;">95</div>
<div class="a" style="left:-1.5px;top:279.5px;width:438.5px;height:1.2px;background:#dfe1e6"></div>
<div class="t" style="top:253.86px;font-size:13.4px;line-height:13.4px;color:#2b2f36;font-weight:normal;left:17.50px;">10785</div>
<div class="t" style="top:253.86px;font-size:13.4px;line-height:13.4px;color:#2b2f36;font-weight:normal;left:127.50px;transform:scaleX(1.06);transform-origin:0 50%;">Microsoft…</div>
<svg class="a" style="left:237.0px;top:253.5px;" width="16" height="17" viewBox="0 0 16 17"><path d="M8 1 L14.4 3.2 V8.8 C14.4 12 11.8 14.4 8 16 C4.2 14.4 1.6 12 1.6 8.8 V3.2 Z" fill="none" stroke="#5a93e0" stroke-width="1.1" stroke-linejoin="round"/><rect x="7.35" y="7.6" width="1.3" height="4.6" fill="#5a93e0"/><circle cx="8" cy="5.6" r="0.8" fill="#5a93e0"/></svg>
<div class="t" style="top:253.86px;font-size:13.4px;line-height:13.4px;color:#4f84d3;font-weight:normal;left:259.50px;">Info</div>
<div class="t" style="top:253.86px;font-size:13.4px;line-height:13.4px;color:#2b2f36;font-weight:normal;left:347.50px;">95</div>
</div>
<div class="a" style="left:1107px;top:823px;width:455px;height:261px;border:1.5px solid #d9dbe1;background:#fff"></div>
<div class="a" style="left:1108.5px;top:824.5px;width:452px;height:258px;overflow:hidden;">
<div class="t" style="top:13.36px;font-size:12.8px;line-height:12.8px;color:#2b2f36;font-weight:bold;left:17.50px;transform:scaleX(0.93);transform-origin:0 50%;">Plugin ID</div>
<div class="t" style="top:13.36px;font-size:12.8px;line-height:12.8px;color:#2b2f36;font-weight:bold;left:127.50px;transform:scaleX(0.93);transform-origin:0 50%;">Plugin N...</div>
<div class="t" style="top:13.36px;font-size:12.8px;line-height:12.8px;color:#2b2f36;font-weight:bold;left:237.50px;transform:scaleX(0.93);transform-origin:0 50%;">First Val...</div>
<div class="t" style="top:13.36px;font-size:12.8px;line-height:12.8px;color:#2b2f36;font-weight:bold;left:347.50px;transform:scaleX(0.93);transform-origin:0 50%;">Count</div>
<div class="a" style="left:108.5px;top:12.5px;width:1px;height:13px;background:#cfd2d8"></div>
<div class="a" style="left:218.5px;top:12.5px;width:1px;height:13px;background:#cfd2d8"></div>
<div class="a" style="left:328.5px;top:12.5px;width:1px;height:13px;background:#cfd2d8"></div>
<div class="a" style="left:437.0px;top:12.5px;width:1px;height:13px;background:#cfd2d8"></div>
<div class="a" style="left:-1.5px;top:38.39999999999998px;width:438.5px;height:1.6px;background:#22365a"></div>
<div class="a" style="left:437.0px;top:41.0px;width:15px;height:217px;background:#fafafa;border-left:1px solid #e6e7ea"></div>
<div class="a" style="left:441.5px;top:43.5px;width:7.4px;height:52.5px;background:#c2c2c2;border-radius:4px"></div>
<div class="a" style="left:-1.5px;top:79.5px;width:438.5px;height:1.2px;background:#dfe1e6"></div>
<div class="t" style="top:53.86px;font-size:13.4px;line-height:13.4px;color:#2b2f36;font-weight:normal;left:17.50px;">1967</div>
<div class="t" style="top:53.86px;font-size:13.4px;line-height:13.4px;color:#2b2f36;font-weight:normal;left:127.50px;transform:scaleX(1.06);transform-origin:0 50%;">SSH Ser…</div>
<svg class="a" style="left:237.0px;top:53.5px;" width="16" height="17" viewBox="0 0 16 17"><path d="M8 1 L14.4 3.2 V8.8 C14.4 12 11.8 14.4 8 16 C4.2 14.4 1.6 12 1.6 8.8 V3.2 Z" fill="none" stroke="#5a93e0" stroke-width="1.1" stroke-linejoin="round"/><rect x="7.35" y="7.6" width="1.3" height="4.6" fill="#5a93e0"/><circle cx="8" cy="5.6" r="0.8" fill="#5a93e0"/></svg>
<div class="t" style="top:53.86px;font-size:13.4px;line-height:13.4px;color:#4f84d3;font-weight:normal;left:259.50px;">Info</div>
<div class="t" style="top:53.86px;font-size:13.4px;line-height:13.4px;color:#2b2f36;font-weight:normal;left:347.50px;">288</div>
<div class="a" style="left:-1.5px;top:119.5px;width:438.5px;height:1.2px;background:#dfe1e6"></div>
<div class="t" style="top:93.86px;font-size:13.4px;line-height:13.4px;color:#2b2f36;font-weight:normal;left:17.50px;">1997</div>
<div class="t" style="top:93.86px;font-size:13.4px;line-height:13.4px;color:#2b2f36;font-weight:normal;left:127.50px;transform:scaleX(1.06);transform-origin:0 50%;">OpenSS…</div>
<svg class="a" style="left:237.0px;top:93.5px;" width="16" height="17" viewBox="0 0 16 17"><path d="M8 1 L14.4 3.2 V8.8 C14.4 12 11.8 14.4 8 16 C4.2 14.4 1.6 12 1.6 8.8 V3.2 Z" fill="none" stroke="#5a93e0" stroke-width="1.1" stroke-linejoin="round"/><rect x="7.35" y="7.6" width="1.3" height="4.6" fill="#5a93e0"/><circle cx="8" cy="5.6" r="0.8" fill="#5a93e0"/></svg>
<div class="t" style="top:93.86px;font-size:13.4px;line-height:13.4px;color:#4f84d3;font-weight:normal;left:259.50px;">Info</div>
<div class="t" style="top:93.86px;font-size:13.4px;line-height:13.4px;color:#2b2f36;font-weight:normal;left:347.50px;">170</div>
<div class="a" style="left:-1.5px;top:159.5px;width:438.5px;height:1.2px;background:#dfe1e6"></div>
<div class="t" style="top:133.86px;font-size:13.4px;line-height:13.4px;color:#2b2f36;font-weight:normal;left:17.50px;">70657</div>
<div class="t" style="top:133.86px;font-size:13.4px;line-height:13.4px;color:#2b2f36;font-weight:normal;left:127.50px;transform:scaleX(1.06);transform-origin:0 50%;">SSH Algo…</div>
<svg class="a" style="left:237.0px;top:133.5px;" width="16" height="17" viewBox="0 0 16 17"><path d="M8 1 L14.4 3.2 V8.8 C14.4 12 11.8 14.4 8 16 C4.2 14.4 1.6 12 1.6 8.8 V3.2 Z" fill="none" stroke="#5a93e0" stroke-width="1.1" stroke-linejoin="round"/><rect x="7.35" y="7.6" width="1.3" height="4.6" fill="#5a93e0"/><circle cx="8" cy="5.6" r="0.8" fill="#5a93e0"/></svg>
<div class="t" style="top:133.86px;font-size:13.4px;line-height:13.4px;color:#4f84d3;font-weight:normal;left:259.50px;">Info</div>
<div class="t" style="top:133.86px;font-size:13.4px;line-height:13.4px;color:#2b2f36;font-weight:normal;left:347.50px;">162</div>
<div class="a" style="left:-1.5px;top:199.5px;width:438.5px;height:1.2px;background:#dfe1e6"></div>
<div class="t" style="top:173.86px;font-size:13.4px;line-height:13.4px;color:#2b2f36;font-weight:normal;left:17.50px;">10267</div>
<div class="t" style="top:173.86px;font-size:13.4px;line-height:13.4px;color:#2b2f36;font-weight:normal;left:127.50px;transform:scaleX(1.06);transform-origin:0 50%;">SSH Ser…</div>
<svg class="a" style="left:237.0px;top:173.5px;" width="16" height="17" viewBox="0 0 16 17"><path d="M8 1 L14.4 3.2 V8.8 C14.4 12 11.8 14.4 8 16 C4.2 14.4 1.6 12 1.6 8.8 V3.2 Z" fill="none" stroke="#5a93e0" stroke-width="1.1" stroke-linejoin="round"/><rect x="7.35" y="7.6" width="1.3" height="4.6" fill="#5a93e0"/><circle cx="8" cy="5.6" r="0.8" fill="#5a93e0"/></svg>
<div class="t" style="top:173.86px;font-size:13.4px;line-height:13.4px;color:#4f84d3;font-weight:normal;left:259.50px;">Info</div>
<div class="t" style="top:173.86px;font-size:13.4px;line-height:13.4px;color:#2b2f36;font-weight:normal;left:347.50px;">161</div>
<div class="a" style="left:-1.5px;top:239.5px;width:438.5px;height:1.2px;background:#dfe1e6"></div>
<div class="t" style="top:213.86px;font-size:13.4px;line-height:13.4px;color:#2b2f36;font-weight:normal;left:17.50px;">10881</div>
<div class="t" style="top:213.86px;font-size:13.4px;line-height:13.4px;color:#2b2f36;font-weight:normal;left:127.50px;transform:scaleX(1.06);transform-origin:0 50%;">SSH Prot…</div>
<svg class="a" style="left:237.0px;top:213.5px;" width="16" height="17" viewBox="0 0 16 17"><path d="M8 1 L14.4 3.2 V8.8 C14.4 12 11.8 14.4 8 16 C4.2 14.4 1.6 12 1.6 8.8 V3.2 Z" fill="none" stroke="#5a93e0" stroke-width="1.1" stroke-linejoin="round"/><rect x="7.35" y="7.6" width="1.3" height="4.6" fill="#5a93e0"/><circle cx="8" cy="5.6" r="0.8" fill="#5a93e0"/></svg>
<div class="t" style="top:213.86px;font-size:13.4px;line-height:13.4px;color:#4f84d3;font-weight:normal;left:259.50px;">Info</div>
<div class="t" style="top:213.86px;font-size:13.4px;line-height:13.4px;color:#2b2f36;font-weight:normal;left:347.50px;">158</div>
<div class="a" style="left:-1.5px;top:279.5px;width:438.5px;height:1.2px;background:#dfe1e6"></div>
<div class="t" style="top:253.86px;font-size:13.4px;line-height:13.4px;color:#2b2f36;font-weight:normal;left:17.50px;">149334</div>
<div class="t" style="top:253.86px;font-size:13.4px;line-height:13.4px;color:#2b2f36;font-weight:normal;left:127.50px;transform:scaleX(1.06);transform-origin:0 50%;">SSH Pas…</div>
<svg class="a" style="left:237.0px;top:253.5px;" width="16" height="17" viewBox="0 0 16 17"><path d="M8 1 L14.4 3.2 V8.8 C14.4 12 11.8 14.4 8 16 C4.2 14.4 1.6 12 1.6 8.8 V3.2 Z" fill="none" stroke="#5a93e0" stroke-width="1.1" stroke-linejoin="round"/><rect x="7.35" y="7.6" width="1.3" height="4.6" fill="#5a93e0"/><circle cx="8" cy="5.6" r="0.8" fill="#5a93e0"/></svg>
<div class="t" style="top:253.86px;font-size:13.4px;line-height:13.4px;color:#4f84d3;font-weight:normal;left:259.50px;">Info</div>
<div class="t" style="top:253.86px;font-size:13.4px;line-height:13.4px;color:#2b2f36;font-weight:normal;left:347.50px;">153</div>
</div>
<div class="a" style="left:843.0px;top:484px;width:1px;height:185.5px;background:#e6e6e6"></div>
<div class="a" style="left:909.0px;top:484px;width:1px;height:185.5px;background:#e6e6e6"></div>
<div class="a" style="left:975.1px;top:484px;width:1px;height:185.5px;background:#e6e6e6"></div>
<div class="a" style="left:1041.5px;top:484px;width:1px;height:185.5px;background:#e6e6e6"></div>
<div class="a" style="left:777px;top:484px;width:1px;height:185.5px;background:#d9d9d9"></div>
<div class="a" style="left:777.5px;top:487.4px;width:224.29999999999995px;height:30.0px;background:#52a0ec"></div>
<div class="a" style="left:777.5px;top:524.5px;width:1.1000000000000227px;height:30.0px;background:#4a6fa8"></div>
<div class="a" style="left:777.5px;top:561.6px;width:15.100000000000023px;height:30.100000000000023px;background:#56bfca"></div>
<div class="a" style="left:777.5px;top:599.2px;width:3.2999999999999545px;height:29.299999999999955px;background:#3c7d5f"></div>
<div class="a" style="left:777.5px;top:636.7px;width:130.20000000000005px;height:28.59999999999991px;background:#e29c80"></div>
<div class="t" style="top:496.04px;font-size:12px;line-height:12px;color:#333;font-weight:normal;left:467.30px;width:300px;text-align:right;">Local Checks Enabled</div>
<div class="t" style="top:533.24px;font-size:12px;line-height:12px;color:#333;font-weight:normal;left:467.30px;width:300px;text-align:right;">Local Checks Not Available</div>
<div class="t" style="top:570.44px;font-size:12px;line-height:12px;color:#333;font-weight:normal;left:467.30px;width:300px;text-align:right;">Require Privilege Escalation</div>
<div class="t" style="top:607.64px;font-size:12px;line-height:12px;color:#333;font-weight:normal;left:467.30px;width:300px;text-align:right;">Local Checks Not Enabled</div>
<div class="t" style="top:644.84px;font-size:12px;line-height:12px;color:#333;font-weight:normal;left:467.30px;width:300px;text-align:right;">Local Checks Not Run</div>
<div class="t" style="top:679.64px;font-size:12px;line-height:12px;color:#333;font-weight:normal;left:747.50px;width:60px;text-align:center;">0</div>
<div class="t" style="top:679.64px;font-size:12px;line-height:12px;color:#333;font-weight:normal;left:813.50px;width:60px;text-align:center;">50</div>
<div class="t" style="top:679.64px;font-size:12px;line-height:12px;color:#333;font-weight:normal;left:879.50px;width:60px;text-align:center;">100</div>
<div class="t" style="top:679.64px;font-size:12px;line-height:12px;color:#333;font-weight:normal;left:945.60px;width:60px;text-align:center;">150</div>
<div class="t" style="top:679.64px;font-size:12px;line-height:12px;color:#333;font-weight:normal;left:1012.00px;width:60px;text-align:center;">200</div>
<div class="a" style="left:1121.5px;top:493.7px;width:426px;height:200.8px;border:1.5px solid #d0ccd8"></div>
<div class="a" style="left:1122.5px;top:494.7px;width:212.0px;height:39.30000000000001px;background:#bcb1d1"></div>
<div class="t" style="top:506.97px;font-size:12.2px;line-height:12.2px;color:#fff;font-weight:normal;left:1078.25px;width:300px;text-align:center;-webkit-text-stroke:0.2px #fff;">Auth Local Check Issues</div>
<div class="a" style="left:1335.0px;top:494.7px;width:212.0px;height:39.30000000000001px;background:#bcb1d1"></div>
<div class="t" style="top:506.97px;font-size:12.2px;line-height:12.2px;color:#fff;font-weight:normal;left:1290.75px;width:300px;text-align:center;-webkit-text-stroke:0.2px #fff;">Authentication Status</div>
<div class="a" style="left:1122.5px;top:534.5px;width:212.0px;height:39.5px;background:#bcb1d1"></div>
<div class="t" style="top:546.87px;font-size:12.2px;line-height:12.2px;color:#fff;font-weight:normal;left:1078.25px;width:300px;text-align:center;-webkit-text-stroke:0.2px #fff;">Detected Systems</div>
<div class="t" style="top:546.87px;font-size:12.2px;line-height:12.2px;color:#111;font-weight:normal;left:1290.75px;width:300px;text-align:center;">Don't Scan Devices</div>
<div class="a" style="left:1122.5px;top:574.5px;width:212.0px;height:39.5px;background:#bcb1d1"></div>
<div class="t" style="top:586.87px;font-size:12.2px;line-height:12.2px;color:#fff;font-weight:normal;left:1078.25px;width:300px;text-align:center;-webkit-text-stroke:0.2px #fff;">Local Auth Recon</div>
<div class="a" style="left:1335.0px;top:574.5px;width:212.0px;height:39.5px;background:#bcb1d1"></div>
<div class="t" style="top:586.87px;font-size:12.2px;line-height:12.2px;color:#fff;font-weight:normal;left:1290.75px;width:300px;text-align:center;-webkit-text-stroke:0.2px #fff;">Local Checks Status</div>
<div class="a" style="left:1122.5px;top:614.5px;width:212.0px;height:39.5px;background:#bcb1d1"></div>
<div class="t" style="top:626.87px;font-size:12.2px;line-height:12.2px;color:#fff;font-weight:normal;left:1078.25px;width:300px;text-align:center;-webkit-text-stroke:0.2px #fff;">Windows Access Checks</div>
<div class="a" style="left:1335.0px;top:614.5px;width:212.0px;height:39.5px;background:#bcb1d1"></div>
<div class="t" style="top:626.87px;font-size:12.2px;line-height:12.2px;color:#fff;font-weight:normal;left:1290.75px;width:300px;text-align:center;-webkit-text-stroke:0.2px #fff;">Port Re-check</div>
<div class="t" style="top:666.87px;font-size:12.2px;line-height:12.2px;color:#111;font-weight:normal;left:1078.25px;width:300px;text-align:center;">Third Party Local Checks</div>
<div class="a" style="left:1335.0px;top:654.5px;width:212.0px;height:39.5px;background:#bcb1d1"></div>
<div class="t" style="top:666.87px;font-size:12.2px;line-height:12.2px;color:#fff;font-weight:normal;left:1290.75px;width:300px;text-align:center;-webkit-text-stroke:0.2px #fff;">Windows Access Checks</div>
<div class="a" style="left:1122px;top:533.4px;width:425px;height:1.3px;background:#7f788e"></div>
<div class="a" style="left:1122px;top:573.4px;width:425px;height:1.3px;background:#7f788e"></div>
<div class="a" style="left:1122px;top:613.4px;width:425px;height:1.3px;background:#7f788e"></div>
<div class="a" style="left:1122px;top:653.4px;width:425px;height:1.3px;background:#7f788e"></div>
<div class="a" style="left:1333.9px;top:494.2px;width:1.3px;height:199.8px;background:#7f788e"></div>
<div class="a" style="left:1122px;top:493.59999999999997px;width:425px;height:1.3px;background:#857f92"></div>
<div class="a" style="left:828px;top:845px;width:214px;height:29px;background:#f5f6f8;border:1px solid #cfd1d5;border-left:1.5px solid #c9cbcf;border-bottom:none"></div>
<div class="a" style="left:617px;top:874px;width:212px;height:172px;background:#f5f6f8"></div>
<div class="a" style="left:616px;top:874px;width:427px;height:173px;border:1px solid #cfd1d5;border-top:none;border-left:1.5px solid #d2d4d8"></div>
<div class="a" style="left:617px;top:873px;width:425px;height:1px;background:#88898c"></div>
<div class="a" style="left:617px;top:902px;width:425px;height:1px;background:#88898c"></div>
<div class="a" style="left:617px;top:930px;width:425px;height:1px;background:#88898c"></div>
<div class="a" style="left:617px;top:959px;width:425px;height:1px;background:#88898c"></div>
<div class="a" style="left:617px;top:987px;width:425px;height:1px;background:#88898c"></div>
<div class="a" style="left:617px;top:1016px;width:425px;height:1px;background:#88898c"></div>
<div class="a" style="left:828px;top:874px;width:1px;height:172px;background:#88898c"></div>
<div class="t" style="top:853.81px;font-size:12.6px;line-height:12.6px;color:#333333;font-weight:normal;left:785.50px;width:300px;text-align:center;transform:scaleX(0.97);transform-origin:50% 50%;">Host Detected</div>
<div class="t" style="top:882.23px;font-size:12.6px;line-height:12.6px;color:#333333;font-weight:normal;left:573.10px;width:300px;text-align:center;transform:scaleX(0.975);transform-origin:50% 50%;">Windows SMB Login Possible</div>
<div class="t" style="top:882.23px;font-size:12.6px;line-height:12.6px;color:#333333;font-weight:normal;left:835.50px;width:200px;text-align:center;">76</div>
<div class="t" style="top:910.83px;font-size:12.6px;line-height:12.6px;color:#333333;font-weight:normal;left:573.10px;width:300px;text-align:center;transform:scaleX(0.975);transform-origin:50% 50%;">SSH OS Software Enum</div>
<div class="t" style="top:910.83px;font-size:12.6px;line-height:12.6px;color:#333333;font-weight:normal;left:835.50px;width:200px;text-align:center;">98</div>
<div class="t" style="top:939.48px;font-size:12.6px;line-height:12.6px;color:#333333;font-weight:normal;left:573.10px;width:300px;text-align:center;transform:scaleX(0.975);transform-origin:50% 50%;">SNMP Authentication</div>
<div class="t" style="top:939.48px;font-size:12.6px;line-height:12.6px;color:#333333;font-weight:normal;left:835.50px;width:200px;text-align:center;">0</div>
<div class="t" style="top:968.13px;font-size:12.6px;line-height:12.6px;color:#333333;font-weight:normal;left:573.10px;width:300px;text-align:center;transform:scaleX(0.975);transform-origin:50% 50%;">VMware vSphere Installed</div>
<div class="t" style="top:968.13px;font-size:12.6px;line-height:12.6px;color:#333333;font-weight:normal;left:835.50px;width:200px;text-align:center;">0</div>
<div class="t" style="top:996.73px;font-size:12.6px;line-height:12.6px;color:#333333;font-weight:normal;left:573.10px;width:300px;text-align:center;transform:scaleX(0.975);transform-origin:50% 50%;">PAN-OS Version Detection</div>
<div class="t" style="top:996.73px;font-size:12.6px;line-height:12.6px;color:#333333;font-weight:normal;left:835.50px;width:200px;text-align:center;">0</div>
<div class="t" style="top:1025.33px;font-size:12.6px;line-height:12.6px;color:#333333;font-weight:normal;left:573.10px;width:300px;text-align:center;transform:scaleX(0.975);transform-origin:50% 50%;">Citrix NetScaler Detection</div>
<div class="t" style="top:1025.33px;font-size:12.6px;line-height:12.6px;color:#333333;font-weight:normal;left:835.50px;width:200px;text-align:center;">0</div>
<svg class="a" style="left:200px;top:820px;" width="260" height="260" viewBox="0 0 260 260"><path d="M217.90 120.80 A93.3 93.3 0 0 1 217.86 123.57 L200.07 123.04 A75.5 75.5 0 0 0 200.10 120.80 Z" fill="#e29c80" stroke="#fff" stroke-width="1"/><path d="M217.84 124.22 A93.3 93.3 0 0 1 137.26 213.24 L134.85 195.60 A75.5 75.5 0 0 0 200.05 123.57 Z" fill="#3c7d5f" stroke="#fff" stroke-width="1"/><path d="M137.26 213.24 A93.3 93.3 0 0 1 131.43 213.85 L130.13 196.10 A75.5 75.5 0 0 0 134.85 195.60 Z" fill="#56bfca" stroke="#fff" stroke-width="1"/><path d="M131.43 213.85 A93.3 93.3 0 0 1 50.19 177.08 L64.38 166.34 A75.5 75.5 0 0 0 130.13 196.10 Z" fill="#3a6299" stroke="#fff" stroke-width="1"/><path d="M50.19 177.08 A93.3 93.3 0 1 1 217.89 119.82 L200.10 120.01 A75.5 75.5 0 1 0 64.38 166.34 Z" fill="#52a0ec" stroke="#fff" stroke-width="1"/><g fill="none" stroke="#555" stroke-width="0.9"><path d="M83.80000000000001 15 H89 L94.60000000000002 31"/><path d="M218 122 L234.5 127.5 H241"/><path d="M195 183 L207.5 194.29999999999995 H213"/><path d="M74.89999999999998 222 H82 L87 207"/><path d="M137 213 L138 231 H143"/></g></svg>
<div class="t" style="top:828.84px;font-size:12px;line-height:12px;color:#333;font-weight:normal;left:-21.90px;width:300px;text-align:right;">Authentication Success</div>
<div class="t" style="top:940.34px;font-size:12px;line-height:12px;color:#333;font-weight:normal;left:445.60px;">No Credentials...</div>
<div class="t" style="top:1007.34px;font-size:12px;line-height:12px;color:#333;font-weight:normal;left:418.50px;transform:scaleX(0.99);transform-origin:0 50%;">Authentication Failu...</div>
<div class="t" style="top:1035.34px;font-size:12px;line-height:12px;color:#333;font-weight:normal;left:-31.20px;width:300px;text-align:right;transform:scaleX(0.99);transform-origin:100% 50%;">Success but Insufficient Ac...</div>
<div class="t" style="top:1044.34px;font-size:12px;line-height:12px;color:#333;font-weight:normal;left:348.40px;transform:scaleX(0.995);transform-origin:0 50%;">Success but Intermittent Failure</div>
</body></html>
